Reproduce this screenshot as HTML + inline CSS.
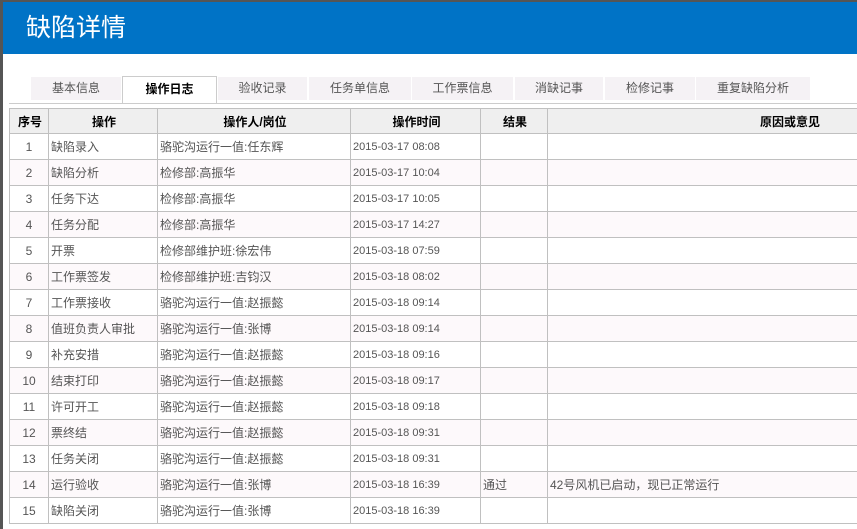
<!DOCTYPE html><html><head><meta charset="utf-8"><style>
body{margin:0;width:857px;height:529px;overflow:hidden;background:#fff;font-family:"Liberation Sans","Noto Sans CJK SC",sans-serif;position:relative}
.lb{position:absolute;left:0;top:0;width:3px;height:529px;background:#555}
.tb{position:absolute;left:0;top:0;width:857px;height:2px;background:#555}
.hd{position:absolute;left:3px;top:2px;width:854px;height:52px;background:#0073c6;color:#fff;font-size:25px;line-height:52px;padding-left:23px;box-sizing:border-box}
.tab{position:absolute;top:77px;height:23px;background:#f5f2f5;color:#555;font-size:12px;line-height:23px;text-align:center}
.tab.a{background:#fff;border:1px solid #ccc;border-bottom:none;top:76px;height:27px;line-height:25px;font-weight:bold;color:#000;box-sizing:border-box}
.ln{position:absolute;left:9px;top:103px;width:848px;height:1px;background:#ccc}
table{position:absolute;left:9px;top:108px;width:850px;border-collapse:collapse;font-size:12px;color:#555;table-layout:fixed}
td,th{border:1px solid #c0c0c0;height:25px;padding:0 0 0 2px;white-space:nowrap;overflow:hidden}
th{background:#efefef;color:#000;font-weight:bold;height:24px;text-align:center}
td:first-child{text-align:center;padding:0}
td:nth-child(4){font-size:11px}
tr:nth-child(odd) td{background:#fdf9fb}
</style></head><body>
<div class="tb"></div><div class="lb"></div>
<div class="hd">缺陷详情</div>
<div class="tab" style="left:31px;width:90px">基本信息</div>
<div class="tab a" style="left:122px;width:95px">操作日志</div>
<div class="tab" style="left:218px;width:89px">验收记录</div>
<div class="tab" style="left:309px;width:102px">任务单信息</div>
<div class="tab" style="left:412px;width:101px">工作票信息</div>
<div class="tab" style="left:515px;width:88px">消缺记事</div>
<div class="tab" style="left:605px;width:90px">检修记事</div>
<div class="tab" style="left:696px;width:114px">重复缺陷分析</div>
<div class="ln"></div>
<table>
<colgroup><col style="width:39px"><col style="width:109px"><col style="width:193px"><col style="width:130px"><col style="width:67px"><col style="width:312px"></colgroup>
<tr><th>序号</th><th>操作</th><th>操作人/岗位</th><th>操作时间</th><th>结果</th><th style="text-align:left;padding-left:212px">原因或意见</th></tr>
<tr><td>1</td><td>缺陷录入</td><td>骆驼沟运行一值:任东辉</td><td>2015-03-17 08:08</td><td></td><td></td></tr>
<tr><td>2</td><td>缺陷分析</td><td>检修部:高振华</td><td>2015-03-17 10:04</td><td></td><td></td></tr>
<tr><td>3</td><td>任务下达</td><td>检修部:高振华</td><td>2015-03-17 10:05</td><td></td><td></td></tr>
<tr><td>4</td><td>任务分配</td><td>检修部:高振华</td><td>2015-03-17 14:27</td><td></td><td></td></tr>
<tr><td>5</td><td>开票</td><td>检修部维护班:徐宏伟</td><td>2015-03-18 07:59</td><td></td><td></td></tr>
<tr><td>6</td><td>工作票签发</td><td>检修部维护班:吉钧汉</td><td>2015-03-18 08:02</td><td></td><td></td></tr>
<tr><td>7</td><td>工作票接收</td><td>骆驼沟运行一值:赵振懿</td><td>2015-03-18 09:14</td><td></td><td></td></tr>
<tr><td>8</td><td>值班负责人审批</td><td>骆驼沟运行一值:张博</td><td>2015-03-18 09:14</td><td></td><td></td></tr>
<tr><td>9</td><td>补充安措</td><td>骆驼沟运行一值:赵振懿</td><td>2015-03-18 09:16</td><td></td><td></td></tr>
<tr><td>10</td><td>结束打印</td><td>骆驼沟运行一值:赵振懿</td><td>2015-03-18 09:17</td><td></td><td></td></tr>
<tr><td>11</td><td>许可开工</td><td>骆驼沟运行一值:赵振懿</td><td>2015-03-18 09:18</td><td></td><td></td></tr>
<tr><td>12</td><td>票终结</td><td>骆驼沟运行一值:赵振懿</td><td>2015-03-18 09:31</td><td></td><td></td></tr>
<tr><td>13</td><td>任务关闭</td><td>骆驼沟运行一值:赵振懿</td><td>2015-03-18 09:31</td><td></td><td></td></tr>
<tr><td>14</td><td>运行验收</td><td>骆驼沟运行一值:张博</td><td>2015-03-18 16:39</td><td>通过</td><td>42号风机已启动，现已正常运行</td></tr>
<tr><td>15</td><td>缺陷关闭</td><td>骆驼沟运行一值:张博</td><td>2015-03-18 16:39</td><td></td><td></td></tr>
</table>
</body></html>
